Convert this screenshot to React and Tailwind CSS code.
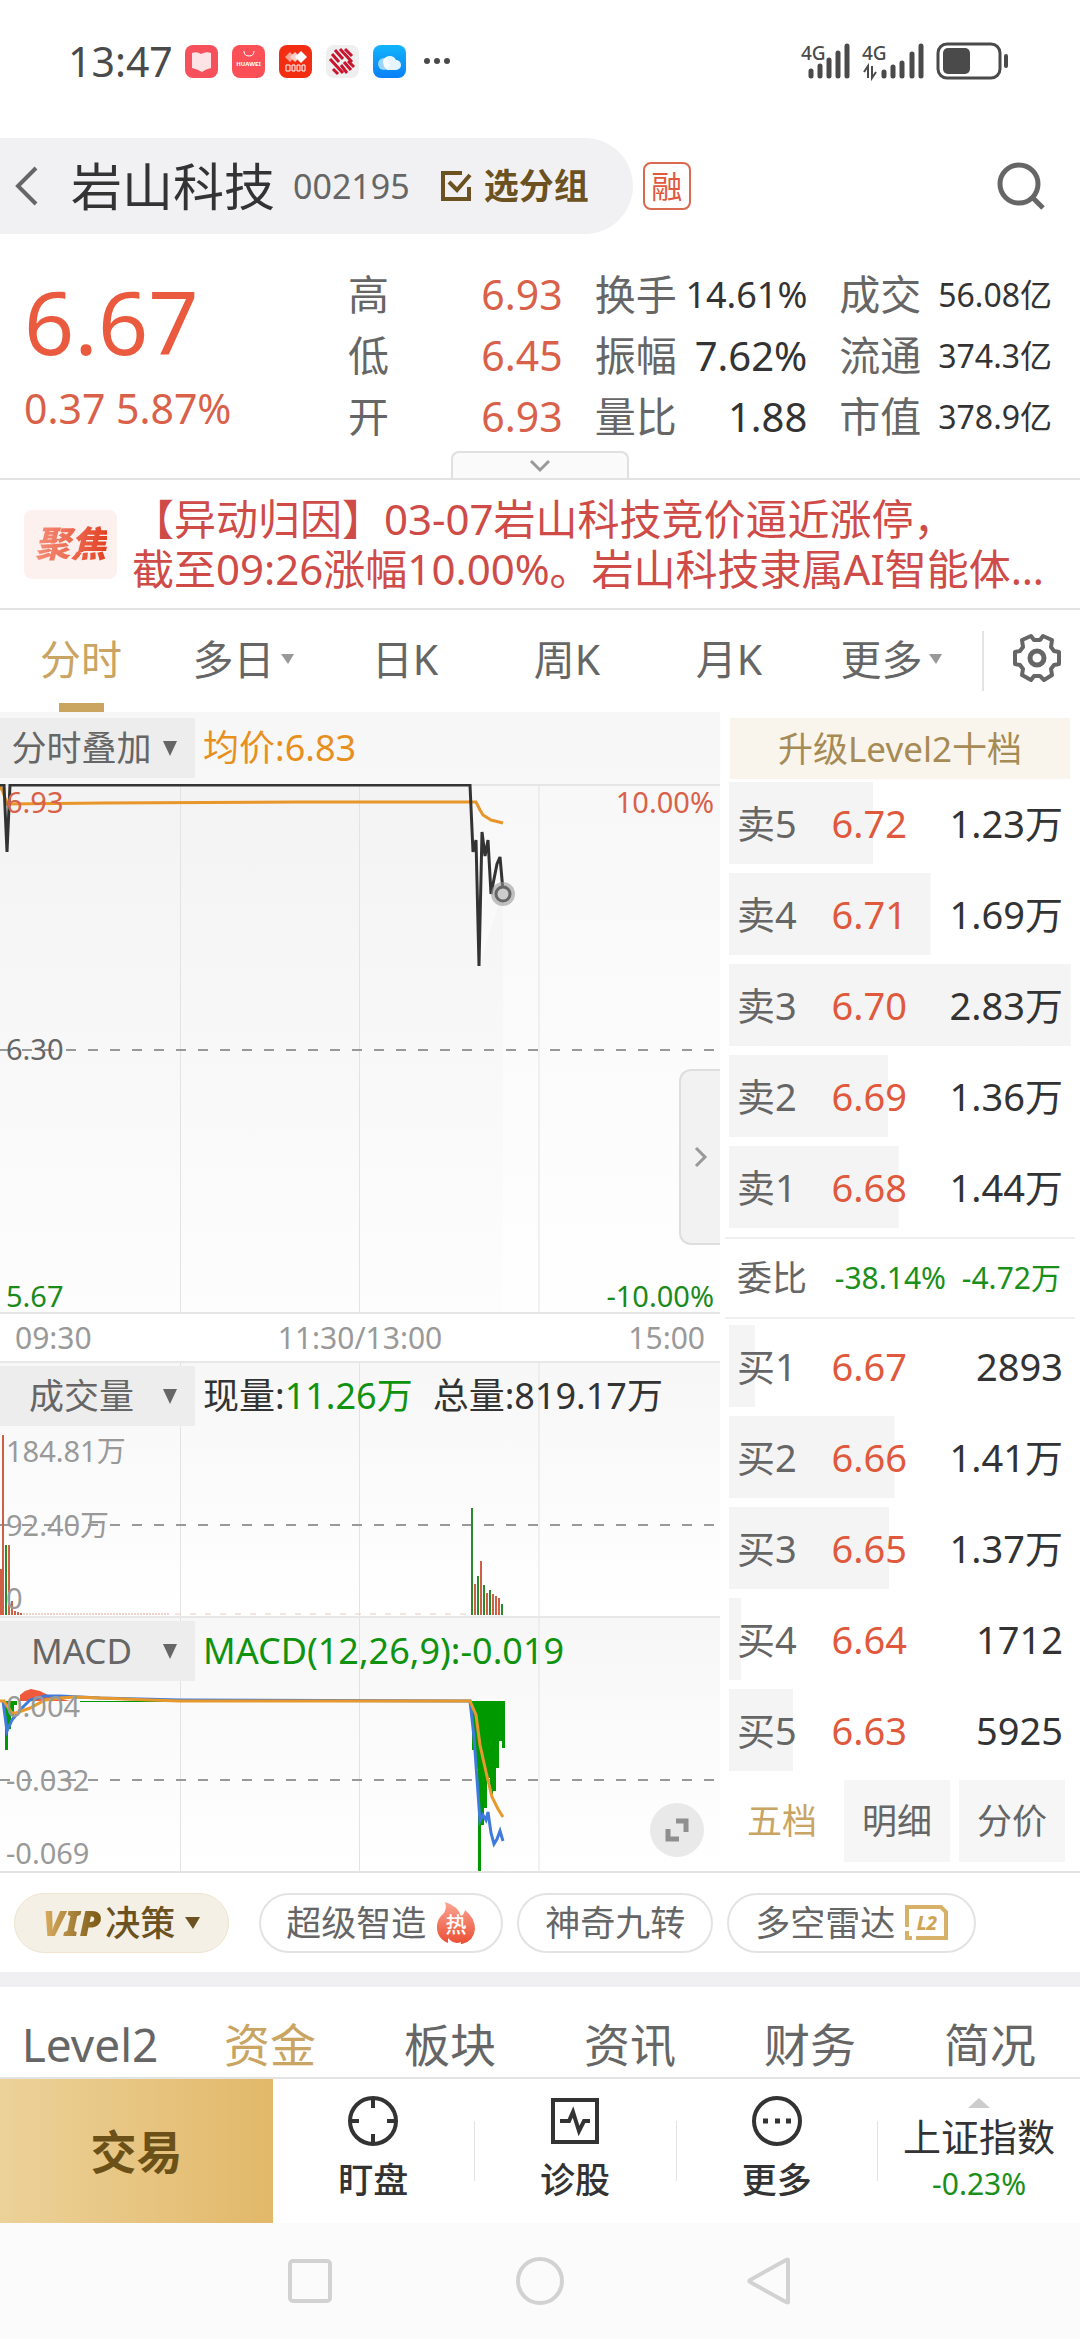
import React, { useState } from "react";

const stats = [
  [
    { label: "高", value: "6.93" },
    { label: "换手", value: "14.61%", size: "text-[36px]" },
    { label: "成交", value: "56.08亿" },
  ],
  [
    { label: "低", value: "6.45" },
    { label: "振幅", value: "7.62%", size: "text-[40px]" },
    { label: "流通", value: "374.3亿" },
  ],
  [
    { label: "开", value: "6.93" },
    { label: "量比", value: "1.88", size: "text-[40px]" },
    { label: "市值", value: "378.9亿" },
  ],
];

const periods = [
  { name: "分时" },
  { name: "多日", menu: true },
  { name: "日K" },
  { name: "周K" },
  { name: "月K" },
  { name: "更多", menu: true },
];

const asks = [
  { label: "卖5", price: "6.72", amount: "1.23万", depth: 42 },
  { label: "卖4", price: "6.71", amount: "1.69万", depth: 59 },
  { label: "卖3", price: "6.70", amount: "2.83万", depth: 100 },
  { label: "卖2", price: "6.69", amount: "1.36万", depth: 46.5 },
  { label: "卖1", price: "6.68", amount: "1.44万", depth: 49.5 },
];

const bids = [
  { label: "买1", price: "6.67", amount: "2893", depth: 7.6 },
  { label: "买2", price: "6.66", amount: "1.41万", depth: 48.3 },
  { label: "买3", price: "6.65", amount: "1.37万", depth: 46.8 },
  { label: "买4", price: "6.64", amount: "1712", depth: 3.5 },
  { label: "买5", price: "6.63", amount: "5925", depth: 18.7 },
];

const RED = "#cf5f45";
const GREEN = "#2b8a2b";

// x, top, color
const volumeBars = [
  [0, 207, RED], [2, 73, RED], [5, 183, GREEN], [8, 183, RED], [11, 239, RED], [14, 249, RED],
  [17, 250, RED], [20, 251, RED], [471, 146, GREEN], [474, 222, RED], [477, 214, GREEN],
  [480, 199, RED], [483, 223, GREEN], [486, 231, RED], [489, 228, GREEN], [492, 232, RED],
  [495, 234, RED], [498, 236, RED], [501, 242, GREEN],
];

const macdBars = [
  [5, 133], [8, 112], [11, 98], [14, 88], [472, 133], [475, 152], [478, 254], [481, 208],
  [484, 191], [487, 161], [490, 177], [493, 174], [496, 151], [499, 124], [502, 131],
];

const tabs = ["Level2", "资金", "板块", "资讯", "财务", "简况"];

const StatusBar = () => (
  <div className="flex items-center h-[138px] pl-[68px] pr-[70px] pb-4 text-[#4a4a4a]">
    <span className="text-[41px] leading-[48px]">13:47</span>
    <div className="flex items-center gap-[14px] ml-3">
      <svg width="33" height="33" viewBox="0 0 33 33">
        <rect width="33" height="33" rx="8" fill="#f5505c" />
        <path d="M7 8q5-2 9 1q5-3 10-1v15q-5 1-9 4q-5-3-10-4z" fill="#fde3e5" />
      </svg>
      <svg width="33" height="33" viewBox="0 0 33 33">
        <rect width="33" height="33" rx="8" fill="#fb5058" />
        <path d="M12 6q0 5 5 5t5-5" fill="none" stroke="#fff" strokeWidth="1" />
        <text x="16.5" y="21" fontSize="6" fontWeight="700" fill="#fff" textAnchor="middle">HUAWEI</text>
      </svg>
      <svg width="33" height="33" viewBox="0 0 33 33">
        <rect width="33" height="33" rx="8" fill="#f22d12" />
        <path d="M11 7l5 5-5 5-5-5z" fill="#f9a595" />
        <path d="M16 7l5 5-5 5-5-5z" fill="#fcd2ca" />
        <path d="M22 6l6 6-6 6-6-6z" fill="#fff" />
        <path d="M7 20h4v6H7zM13 20h3v6h-3zM18 20h3v6h-3zM23 20h3v6h-3z" fill="none" stroke="#fff" strokeWidth="1" />
      </svg>
      <svg width="33" height="33" viewBox="0 0 33 33">
        <rect width="33" height="33" rx="8" fill="#f0eff0" />
        <g stroke="#c8152d" strokeWidth="3">
          <path d="M14 4l12 13M9 5l8 9M6 9l7 8M19 4l7 7M4 14l13 14M7 24l5 5M18 17l7 8M15 20l6 8M22 16l6 6" />
        </g>
      </svg>
      <svg width="33" height="33" viewBox="0 0 33 33">
        <defs>
          <linearGradient id="cloud" x1="0" y1="0" x2="0" y2="1">
            <stop offset="0" stopColor="#12b4fb" />
            <stop offset="1" stopColor="#0a80f7" />
          </linearGradient>
        </defs>
        <rect width="33" height="33" rx="8" fill="url(#cloud)" />
        <circle cx="11" cy="19" r="6" fill="#9ad6fd" />
        <path d="M10 16a7 7 0 0 1 13-1a5 5 0 0 1 0 10h-9q-4-3-4-9z" fill="#fff" fillOpacity=".9" />
      </svg>
    </div>
    <svg className="ml-4" width="30" height="8" viewBox="0 0 30 8" fill="currentColor">
      <circle cx="5" cy="4" r="3" />
      <circle cx="15" cy="4" r="3" />
      <circle cx="25" cy="4" r="3" />
    </svg>
    <svg className="ml-auto" width="210" height="42" viewBox="0 0 210 42" fill="currentColor">
      <text x="1" y="20" fontSize="19" fontWeight="500">4G</text>
      <text x="62" y="20" fontSize="19" fontWeight="500">4G</text>
      <g stroke="currentColor" strokeWidth="5" strokeLinecap="round">
        <path d="M11 31v5M20 26v10M29 20v16M38 13v23M47 6v30" />
        <path d="M84 32v4M93 27v9M102 23v13M112 14v22M121 6v30" />
      </g>
      <path d="M64 32l4-6v12M76 32l-4 6v-12" fill="none" stroke="currentColor" strokeWidth="2" />
      <rect x="138" y="4" width="62" height="34" rx="9" fill="none" stroke="currentColor" strokeWidth="3" />
      <rect x="143" y="8" width="27" height="26" rx="5" />
      <path d="M206 16v10" stroke="currentColor" strokeWidth="4" strokeLinecap="round" />
    </svg>
  </div>
);

const Header = () => (
  <header className="flex items-center h-24">
    <div className="flex items-center h-full bg-[#f1f1f3] rounded-r-full pl-[13px] pr-[44px]">
      <button type="button" aria-label="返回">
        <svg width="26" height="42" viewBox="0 0 26 42" fill="none" stroke="#666" strokeWidth="4">
          <path d="M23 3L5 21l18 18" />
        </svg>
      </button>
      <h1 className="text-[51px] leading-[60px] text-[#333] ml-8">岩山科技</h1>
      <span className="text-[34px] leading-[60px] text-[#666] ml-[18px]">002195</span>
      <button type="button" className="flex items-center text-[#6b5220] text-[35px] leading-[60px] font-bold ml-[30px]">
        <svg className="mr-3" width="32" height="32" viewBox="0 0 32 32" fill="none" stroke="currentColor" strokeWidth="4">
          <path d="M22 3H3v26h26V17" />
          <path d="M9 12l8 8L30 5" />
        </svg>
        选分组
      </button>
    </div>
    <span className="flex items-center justify-center size-12 ml-[10px] border-2 border-[#d9694f] rounded-lg text-[#e0593d] text-[31px] leading-[44px]">
      融
    </span>
    <button type="button" aria-label="搜索" className="ml-auto mr-[34px]">
      <svg width="50" height="50" viewBox="0 0 50 50" fill="none" stroke="#666" strokeWidth="5">
        <circle cx="23" cy="23" r="19" />
        <path d="M36 36l11 11" />
      </svg>
    </button>
  </header>
);

const Quote = () => (
  <section className="border-b-2 border-[#e3e3e3]">
    <div className="flex pl-6 pr-7 pt-[30px]">
      <div className="w-[316px]">
        <div className="text-[88px] leading-[114px] text-[#ea5a3e]">6.67</div>
        <div className="text-[41px] leading-[60px] text-[#d9614a]">0.37 5.87%</div>
      </div>
      <div className="flex-1 ml-2">
        {stats.map((row) => (
          <div key={row[0].label} className="flex text-[41px] leading-[61px] text-[#666]">
            <div className="flex justify-between flex-[214]">
              <span>{row[0].label}</span>
              <span className="text-[#d9614a]">{row[0].value}</span>
            </div>
            <div className="flex justify-between flex-[212] ml-8">
              <span>{row[1].label}</span>
              <span className={`${row[1].size} text-[#333]`}>{row[1].value}</span>
            </div>
            <div className="flex justify-between flex-[212] ml-8">
              <span>{row[2].label}</span>
              <span className="text-[32px] text-[#333]">{row[2].value}</span>
            </div>
          </div>
        ))}
      </div>
    </div>
    <button
      type="button"
      aria-label="展开"
      className="flex items-center justify-center w-[178px] h-[27px] mt-1 mx-auto bg-[#fafafa] border-2 border-b-0 border-[#e0e0e0] rounded-t-lg"
    >
      <svg width="22" height="14" viewBox="0 0 22 14" fill="none" stroke="#999" strokeWidth="3">
        <path d="M2 2l9 9 9-9" />
      </svg>
    </button>
  </section>
);

const News = () => (
  <a href="#news" className="flex items-center h-[130px] pl-6 border-b-2 border-[#e3e3e3]">
    <span className="flex items-center justify-center w-[93px] h-[69px] rounded-lg bg-[#fdf1ef]">
      <span className="text-[36px] leading-[44px] font-black italic bg-linear-to-r from-[#f58f7b] to-[#e2401f] bg-clip-text text-transparent">
        聚焦
      </span>
    </span>
    <span className="flex-1 ml-[15px] text-[42px] leading-[50px] text-[#cf4b47] whitespace-nowrap">
      <span className="block">【异动归因】03-07岩山科技竞价逼近涨停，</span>
      <span className="block">截至09:26涨幅10.00%。岩山科技隶属AI智能体…</span>
    </span>
  </a>
);

const PeriodTabs = ({ active, onSelect }) => (
  <nav className="flex h-[102px]">
    <div className="grid grid-cols-6 w-[90%]">
      {periods.map((p) => (
        <button
          key={p.name}
          type="button"
          onClick={() => onSelect(p.name)}
          className={`flex flex-col items-center text-[41px] ${active === p.name ? "text-[#c9a462]" : "text-[#666]"}`}
        >
          <span className="flex items-center leading-[88px] pt-[5px]">
            {p.name}
            {p.menu && (
              <svg className="ml-[6px]" width="13" height="10" viewBox="0 0 13 10" fill="#999">
                <path d="M0 0h13l-6 10z" />
              </svg>
            )}
          </span>
          {active === p.name && <span className="w-[45px] h-[9px] mt-auto bg-[#c9a560]" />}
        </button>
      ))}
    </div>
    <div className="flex flex-1 items-center ml-[10px]">
      <span className="w-[2px] h-[60px] bg-[#e3e3e3]" />
      <button type="button" aria-label="设置" className="ml-[27px] mb-[6px]">
        <svg width="52" height="52" viewBox="0 0 52 52" fill="none" stroke="#666" strokeWidth="4" strokeLinejoin="round">
          <path d="M11 8L20 4L23 8H29L32 4L41 8L40 15L43 19L48 20V32L43 33L40 37L41 43L33 48L29 44H23L20 48L11 43L12 37L9 33L4 32V20L9 19L12 15z" />
          <circle cx="26" cy="26" r="7" strokeWidth="5" />
        </svg>
      </button>
    </div>
  </nav>
);

const PanelHeader = ({ name, children }) => (
  <div className="flex items-center h-[60px] text-[35px] leading-[60px]">
    <button type="button" className="flex items-center w-[195px] h-full pr-[18px] bg-[#ededed] text-[#666]">
      <span className="flex-1 text-center">{name}</span>
      <svg width="14" height="15" viewBox="0 0 14 15" fill="#666">
        <path d="M0 0h14l-7 15z" />
      </svg>
    </button>
    <div className="flex ml-2 text-[36px] leading-[56px] whitespace-pre">{children}</div>
  </div>
);

const Grid = ({ height, mid }) => (
  <>
    <path d={`M180.5 0V${height}M359.5 0V${height}M539 0V${height}`} stroke="#e3e3e3" strokeWidth="1" />
    <path d={`M0 ${mid}H720`} stroke="#999" strokeWidth="2" strokeDasharray="10 12" />
  </>
);

const PriceChart = () => (
  <div className="bg-linear-to-b from-[#f7f7f7] to-white">
    <div className="pt-[6px] pb-[6px]">
      <PanelHeader name="分时叠加">
        <span className="text-[#e8901e]">均价:6.83</span>
      </PanelHeader>
    </div>
    <div className="grid">
      <svg className="[grid-area:1/1] w-full h-[530px]" viewBox="0 0 720 530" preserveAspectRatio="none" fill="none">
        <defs>
          <linearGradient id="area" x1="0" y1="0" x2="0" y2="1">
            <stop offset="0" stopColor="#f3f3f3" />
            <stop offset="1" stopColor="#fdfdfd" />
          </linearGradient>
        </defs>
        <path d="M0 0H470L479 182L503 107V530H0z" fill="url(#area)" />
        <path d="M0 1H720M0 529H720" stroke="#e6e6e6" strokeWidth="2" />
        <Grid height={530} mid={266} />
        <path d="M0 2L3 8L7 20L104 19L298 18H476L480 26L483 31L491 36L503 39" stroke="#e8952a" strokeWidth="3" />
        <path
          d="M0 1H4L7 68L10 1H470L473 68L476 56L479 182L482 48L485 72L488 56L491 110L497 80L500 73L503 107"
          stroke="#333"
          strokeWidth="3"
        />
        <circle cx="503" cy="110" r="12" fill="#999" fillOpacity=".6" />
        <circle cx="503" cy="110" r="7" fill="#ccc" stroke="#666" strokeWidth="3" />
      </svg>
      <div className="[grid-area:1/1] flex justify-between pl-[6px] text-[29px] leading-[36px]">
        <div className="flex flex-col justify-between">
          <span className="text-[#d9614a]">6.93</span>
          <span className="text-[#666]">6.30</span>
          <span className="text-[#1a8a1a]">5.67</span>
        </div>
        <div className="flex flex-col items-end justify-between">
          <span className="pr-[6px] text-[#d9614a]">10.00%</span>
          <button
            type="button"
            aria-label="收起盘口"
            className="flex items-center justify-center w-[41px] h-[176px] mt-[215px] bg-[#f2f2f2] border-2 border-r-0 border-[#dedede] rounded-l-xl"
          >
            <svg width="14" height="22" viewBox="0 0 14 22" fill="none" stroke="#999" strokeWidth="3">
              <path d="M2 2l9 9-9 9" />
            </svg>
          </button>
          <span className="pr-[6px] text-[#1a8a1a]">-10.00%</span>
        </div>
      </div>
    </div>
    <div className="flex justify-between px-[15px] bg-white text-[30px] leading-[47px] text-[#999]">
      <span>09:30</span>
      <span>11:30/13:00</span>
      <span>15:00</span>
    </div>
  </div>
);

const SubChart = ({ name, legend, labels, action, children }) => (
  <div className="grid h-[255px] border-t-2 border-[#e8e8e8] bg-linear-to-b from-[#f7f7f7] to-white">
    <svg className="[grid-area:1/1] w-full h-[253px]" viewBox="0 1 720 253" preserveAspectRatio="none" fill="none">
      <Grid height={254} mid={163} />
      {children}
    </svg>
    <div className="[grid-area:1/1] flex flex-col pt-[3px]">
      <PanelHeader name={name}>{legend}</PanelHeader>
      <div className="flex flex-1 justify-between pl-[6px] pr-4">
        <div className="flex flex-col justify-between pt-[7px] text-[29px] leading-[36px] text-[#999]">
          {labels.map((label) => (
            <span key={label}>{label}</span>
          ))}
        </div>
        {action}
      </div>
    </div>
  </div>
);

const VolumeChart = () => (
  <SubChart
    name="成交量"
    labels={["184.81万", "92.40万", "0"]}
    legend={
      <>
        <span className="text-[#333]">现量:</span>
        <span className="text-[#0f930f]">11.26万</span>
        <span className="ml-5 text-[#333]">总量:819.17万</span>
      </>
    }
  >
    <path d="M20 252H170" stroke="#e0a597" strokeWidth="1" strokeDasharray="2 1" />
    <path d="M175 252H470" stroke="#ecc9c0" strokeWidth="1" strokeDasharray="6 9" />
    {volumeBars.map(([x, top, color]) => (
      <rect key={x} x={x} y={top} width="2" height={253 - top} fill={color} />
    ))}
  </SubChart>
);

const MacdChart = () => (
  <SubChart
    name="MACD"
    labels={["0.004", "-0.032", "-0.069"]}
    legend={<span className="text-[#0f930f]">MACD(12,26,9):-0.019</span>}
    action={
      <button
        type="button"
        aria-label="全屏"
        className="flex items-center justify-center self-end size-[54px] mb-[14px] rounded-full bg-[#e9e9e9]"
      >
        <svg width="26" height="26" viewBox="0 0 26 26" fill="none" stroke="#8f8f8f" strokeWidth="5">
          <path d="M12 4h10v11M4 12v10h11" />
        </svg>
      </button>
    }
  >
    {macdBars.map(([x, bottom]) => (
      <rect key={x} x={x} y="84" width="3" height={bottom - 84} fill="#009a00" />
    ))}
    <path d="M80 84h90v1H80z" fill="#009a00" />
    <path d="M20 84V78L25 74L31 72L40 74L50 79L70 84z" fill="#ef5a3c" />
    <path
      d="M3 84L7 114L12 103L20 93L30 83L45 79L60 79L100 81L180 83L470 84L474 120L480 204L483 198L486 203L488 195L491 216L494 227L497 222L500 214L503 224"
      stroke="#3f7bdc"
      strokeWidth="3"
    />
    <path
      d="M0 84H4L7 89L12 96H16L30 91L45 83L60 81L75 80L100 81L150 83L180 84H470L476 98L480 128L486 155L492 180L498 192L503 200"
      stroke="#e8992d"
      strokeWidth="3"
    />
  </SubChart>
);

const OrderTable = ({ rows, caption }) => (
  <table className="w-full table-fixed text-[38px] leading-[82px] whitespace-nowrap" aria-label={caption}>
    <tbody>
      {rows.map((row) => (
        <tr
          key={row.label}
          className="bg-linear-to-r from-[#f4f4f4] to-[#f4f4f4] bg-no-repeat"
          style={{ backgroundSize: `${row.depth}% 82px` }}
        >
          <th scope="row" className="w-[30%] p-0 pl-2 pb-[9px] text-left font-normal text-[#666]">
            {row.label}
          </th>
          <td className="w-[23%] p-0 pb-[9px] text-[#e0593d]">{row.price}</td>
          <td className="p-0 pr-2 pb-[9px] text-right text-[#333]">{row.amount}</td>
        </tr>
      ))}
    </tbody>
  </table>
);

const OrderBook = () => {
  const [view, setView] = useState("五档");

  return (
    <aside className="w-1/3 pl-[5px] pr-[5px] pt-[6px]">
      <button type="button" className="block w-[340px] max-w-full mx-auto mb-[3px] bg-[#f9f5ec] text-[35px] leading-[61px] text-[#a78b55]">
        升级Level2十档
      </button>
      <div className="px-1">
        <OrderTable rows={asks} caption="卖盘" />
      </div>
      <div className="flex items-center justify-between h-[82px] pl-3 pr-[14px] border-y-2 border-[#efefef] text-[30px] leading-[78px] text-[#1a8f1a]">
        <span className="text-[35px] text-[#666]">委比</span>
        <span className="ml-3">-38.14%</span>
        <span>-4.72万</span>
      </div>
      <div className="px-1 pt-[6px]">
        <OrderTable rows={bids} caption="买盘" />
      </div>
      <div className="flex gap-[9px] pl-1 pr-[10px]">
        {["五档", "明细", "分价"].map((name) => (
          <button
            key={name}
            type="button"
            onClick={() => setView(name)}
            className={`flex-1 text-[35px] leading-[82px] ${
              view === name ? "text-[#c9a462]" : "bg-[#f6f6f6] text-[#666]"
            }`}
          >
            {name}
          </button>
        ))}
      </div>
    </aside>
  );
};

const Tools = () => (
  <div className="flex items-center h-[101px] pl-[14px] border-t-2 border-[#e3e3e3] text-[35px] leading-[56px] text-[#666]">
    <button type="button" className="flex items-center h-[60px] px-7 mr-[30px] rounded-full bg-[#f5f0e5] border border-[#eee4cf] font-medium text-[#6b5220]">
      <span className="mr-1 font-black italic bg-linear-to-r from-[#dcae60] to-[#7a5a16] bg-clip-text text-transparent">VIP</span>
      决策
      <svg className="ml-[10px]" width="15" height="12" viewBox="0 0 15 12" fill="currentColor">
        <path d="M0 0h15l-7 12z" />
      </svg>
    </button>
    <button type="button" className="flex items-center h-[60px] px-[25px] mr-[14px] rounded-full border-2 border-[#e3e3e3]">
      超级智造
      <svg className="ml-[10px]" width="40" height="44" viewBox="0 0 40 44">
        <defs>
          <linearGradient id="fire" x1="0" y1="0" x2="0" y2="1">
            <stop offset="0" stopColor="#fba593" />
            <stop offset="1" stopColor="#ea4f33" />
          </linearGradient>
        </defs>
        <path d="M9 1Q22 5 25 15Q28 14 29 9Q39 17 39 28Q38 40 26 43Q24 43 25 41Q18 44 12 37V42Q0 37 1 24Q2 17 8 12Q11 7 9 1z" fill="url(#fire)" />
        <text x="20" y="31" fontSize="21" fontWeight="500" fill="#fff" textAnchor="middle">热</text>
      </svg>
    </button>
    <button type="button" className="h-[60px] px-[26px] mr-[14px] rounded-full border-2 border-[#e3e3e3]">
      神奇九转
    </button>
    <button type="button" className="flex items-center h-[60px] px-[26px] rounded-full border-2 border-[#e3e3e3]">
      多空雷达
      <svg className="ml-[10px]" width="43" height="35" viewBox="0 0 43 35">
        <path d="M2 22V2H36L41 7V33H11M2 26V33H7" fill="none" stroke="#d8b168" strokeWidth="4" />
        <text x="22" y="25" fontSize="19" fontWeight="800" fontStyle="italic" fill="#d0a455" textAnchor="middle">L2</text>
      </svg>
    </button>
  </div>
);

const icons = {
  盯盘: (
    <>
      <circle cx="27" cy="27" r="23" />
      <path d="M27 3v11M27 40v11M3 27h10M41 27h10" />
    </>
  ),
  诊股: (
    <>
      <path d="M5 6h44v42H5z" />
      <path d="M12 27h9l4-9 6 19 5-10h6" strokeWidth="4" />
    </>
  ),
  更多: (
    <>
      <circle cx="27" cy="27" r="23" />
      <path d="M13 27h5M25 27h5M36 27h5" strokeWidth="5" />
    </>
  ),
};

const BottomBar = () => (
  <footer className="flex h-36 text-[#333]">
    <button type="button" className="w-[273px] bg-linear-to-r from-[#ecd299] to-[#e2b869] text-[46px] leading-[60px] font-bold text-[#6b5118]">
      交易
    </button>
    <div className="grid grid-cols-4 flex-1">
      {Object.keys(icons).map((name) => (
        <div key={name} className="flex items-center">
          <button type="button" className="flex flex-col flex-1 items-center text-[35px] leading-[44px] font-medium pb-[6px]">
            <svg className="mb-[10px]" width="54" height="54" viewBox="0 0 54 54" fill="none" stroke="currentColor" strokeWidth="4">
              {icons[name]}
            </svg>
            {name}
          </button>
          <span className="w-px h-[60px] bg-[#e3e3e3]" />
        </div>
      ))}
      <button type="button" className="flex flex-col items-center justify-start pt-[19px] text-[38px] leading-[44px]">
        <svg className="mb-[6px]" width="22" height="10" viewBox="0 0 22 10" fill="#ccc">
          <path d="M11 0l11 10H0z" />
        </svg>
        上证指数
        <span className="text-[30px] leading-[52px] text-[#1a8f1a]">-0.23%</span>
      </button>
    </div>
  </footer>
);

const SystemNav = () => (
  <div className="flex items-center justify-center gap-[182px] h-[116px] bg-[#fbfbfb]">
    {[
      { label: "最近任务", shape: <rect x="4" y="4" width="40" height="40" rx="3" /> },
      { label: "主页", shape: <circle cx="24" cy="24" r="22" /> },
      { label: "后退", shape: <path d="M42 3v42q0 1-2 0L4 25q-1-1 0-2L40 3q2-1 2 0z" /> },
    ].map(({ label, shape }) => (
      <button key={label} type="button" aria-label={label}>
        <svg width="48" height="48" viewBox="0 0 48 48" fill="none" stroke="#d2d2d2" strokeWidth="4">
          {shape}
        </svg>
      </button>
    ))}
  </div>
);

export default function App() {
  const [period, setPeriod] = useState("分时");
  const [tab, setTab] = useState("资金");

  return (
    <div lang="zh-CN" className="bg-white font-['Noto_Sans','Noto_Sans_CJK_SC',sans-serif]">
      <StatusBar />
      <Header />
      <Quote />
      <News />
      <PeriodTabs active={period} onSelect={setPeriod} />
      <main className="flex">
        <div className="w-2/3">
          <PriceChart />
          <VolumeChart />
          <MacdChart />
        </div>
        <OrderBook />
      </main>
      <Tools />
      <nav className="grid grid-cols-6 h-[107px] pt-[23px] border-t-[15px] border-t-[#f0f0f3] border-b-2 border-b-[#e3e3e3] text-[46px] leading-[60px]">
        {tabs.map((name) => (
          <button
            key={name}
            type="button"
            onClick={() => setTab(name)}
            className={tab === name ? "text-[#c9a462]" : "text-[#666]"}
          >
            {name}
          </button>
        ))}
      </nav>
      <BottomBar />
      <SystemNav />
    </div>
  );
}
